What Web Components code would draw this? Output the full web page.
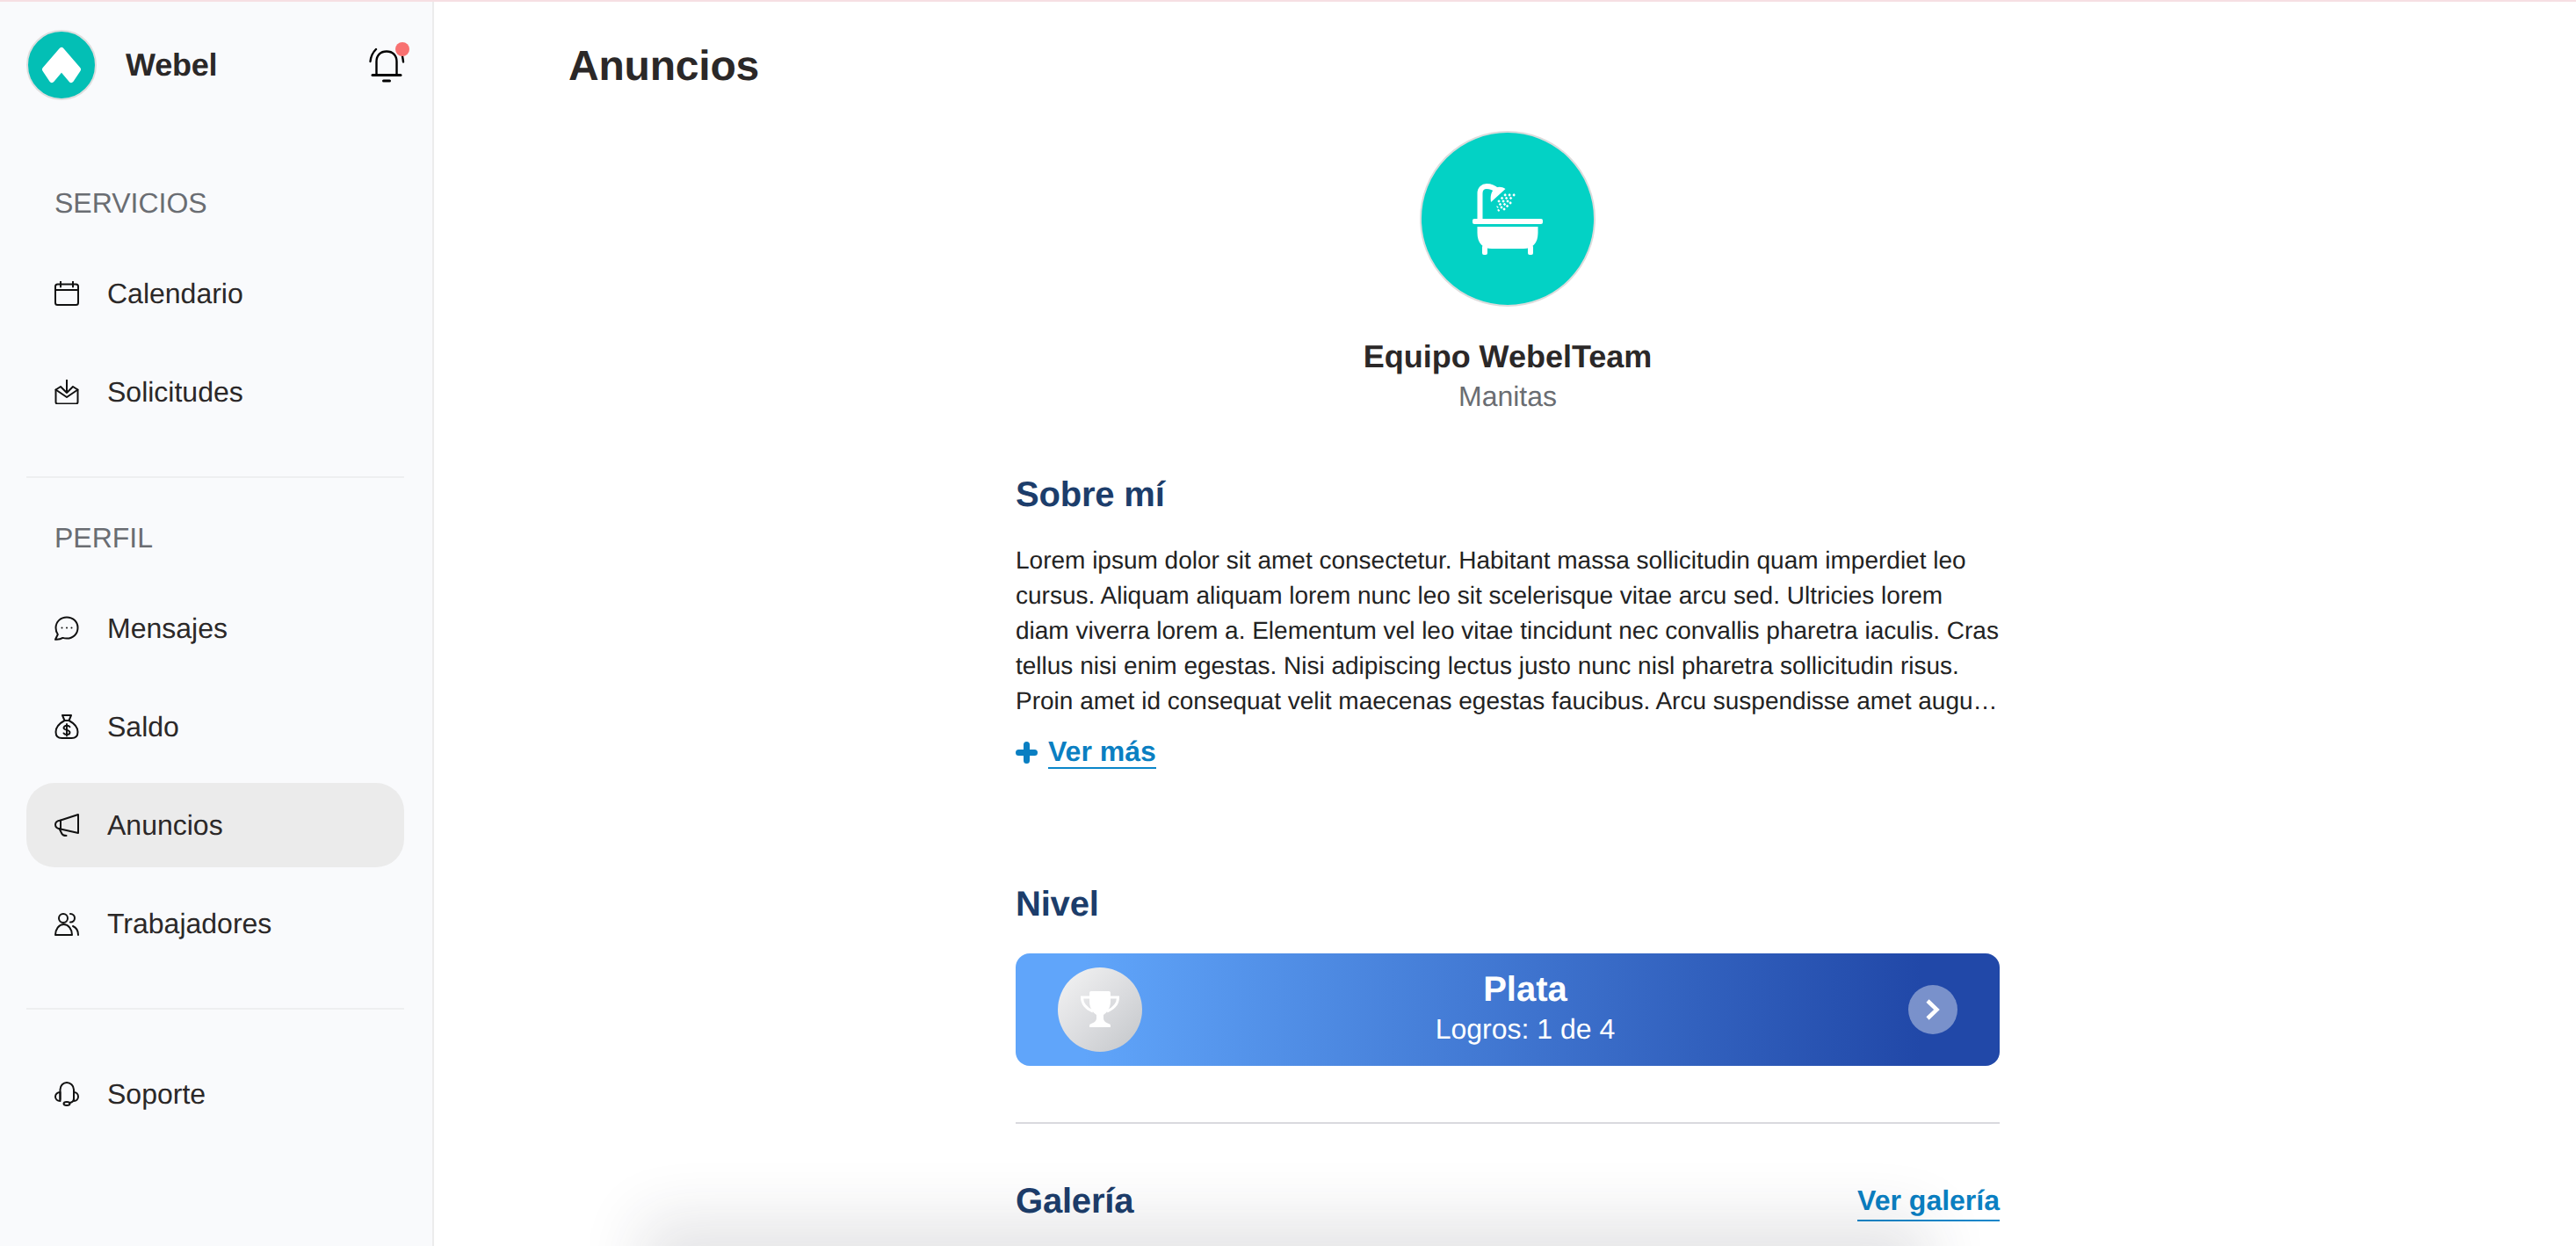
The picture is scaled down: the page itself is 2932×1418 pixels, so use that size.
<!DOCTYPE html>
<html lang="es">
<head>
<meta charset="utf-8">
<title>Anuncios</title>
<style>
  html, body { margin: 0; height: 100%; overflow: hidden; background: #fff; }
  body { font-family: "Liberation Sans", Arial, sans-serif; color: #2b2828; text-rendering: geometricPrecision; }
  app-shell { height: 1418px; }
</style>
</head>
<body>
<app-shell>
  <side-bar slot="side">
    <nav-label>SERVICIOS</nav-label>
    <nav-item icon="calendar">Calendario</nav-item>
    <nav-item icon="inbox">Solicitudes</nav-item>
    <nav-divider></nav-divider>
    <nav-label>PERFIL</nav-label>
    <nav-item icon="chat">Mensajes</nav-item>
    <nav-item icon="bag">Saldo</nav-item>
    <nav-item icon="megaphone" active>Anuncios</nav-item>
    <nav-item icon="users">Trabajadores</nav-item>
    <nav-divider></nav-divider>
    <nav-item icon="headset">Soporte</nav-item>
  </side-bar>
  <ad-page>
    <team-profile name="Equipo WebelTeam" role="Manitas"></team-profile>
    <about-block>Lorem ipsum dolor sit amet consectetur. Habitant massa sollicitudin quam imperdiet leo cursus. Aliquam aliquam lorem nunc leo sit scelerisque vitae arcu sed. Ultricies lorem diam viverra lorem a. Elementum vel leo vitae tincidunt nec convallis pharetra iaculis. Cras tellus nisi enim egestas. Nisi adipiscing lectus justo nunc nisl pharetra sollicitudin risus. Proin amet id consequat velit maecenas egestas faucibus. Arcu suspendisse amet augu…</about-block>
    <level-card level="Plata" progress="Logros: 1 de 4"></level-card>
    <gallery-head></gallery-head>
  </ad-page>
</app-shell>

<script>
const ICONS = {
  calendar: '<rect x="1" y="3.500" width="26" height="23.500" rx="2.500"/><path d="M1 10h26M7 .5v6M21 .5v6"/>',
  inbox: '<path d="M7 8L1.500 11.500V25.500a2 2 0 0 0 2 2h21a2 2 0 0 0 2-2V11.500L21 8"/><path d="M1.500 11.500L14 20L26.500 11.500"/><path d="M14 .5V15M7.500 8.500L14 15L20.500 8.500"/>',
  chat: '<path d="M14 1.500C7 1.500 1.500 6.500 1.500 13.500c0 3 .8 5.500 2.300 7.500L1 26.800c3.500.3 6.500-.6 8.500-1.900 1.400.5 2.900.7 4.500.7 7 0 12.500-5 12.500-12.100S21 1.500 14 1.500z"/><circle cx="8.500" cy="13.500" r="1" fill="currentColor" stroke="none"/><circle cx="14" cy="13.500" r="1" fill="currentColor" stroke="none"/><circle cx="19.500" cy="13.500" r="1" fill="currentColor" stroke="none"/>',
  bag: '<path d="M9 1h10l-2.500 6h-5z"/><path d="M11.500 7C6 10 1.500 14.500 1.500 20c0 5 3 7 7 7h11c4 0 7-2 7-7 0-5.500-4.500-10-10-13"/><path d="M17.500 14.300c-.6-1-1.900-1.600-3.500-1.600-2 0-3.500 1-3.500 2.600 0 3.400 7 1.700 7 5.100 0 1.600-1.500 2.600-3.500 2.600-1.600 0-2.900-.6-3.500-1.600M14 11v13.500" stroke-width="1.900"/>',
  megaphone: '<path d="M27 2v21L7 18.500C3.500 18 1 16 1 13.500S3.500 9 7 8.500z"/><path d="M7 8.500v10M5.500 18l3 6c.6 1.200 2.500 2 5 2"/>',
  users: '<circle cx="10" cy="8" r="5"/><path d="M1 27c0-6.500 4-12 9.500-12s9.500 5.500 9.500 12z"/><path d="M18 3c3 0 5 2 5 4.800s-2 4.800-5 4.800M21 17c3.500 1.500 6 5 6 10"/>',
  headset: '<path d="M6.500 20V9C6.500 4.500 10 1 14 1s8 3.500 8 8v10c0 2.500-2 4.500-4.500 5"/><path d="M6.500 12C3.200 12 1 14.200 1 17s2.200 5 5.500 5zM22 12c3 0 5 2.200 5 5s-2 5-5 5z"/><ellipse cx="14" cy="25" rx="3.500" ry="2"/>'
};

function svgIcon(name) {
  return `<svg viewBox="0 0 28 28" width="28" height="28" fill="none" stroke="currentColor" stroke-width="2" stroke-linecap="round" stroke-linejoin="round">${ICONS[name]}</svg>`;
}

class AppShell extends HTMLElement {
  constructor() {
    super();
    this.attachShadow({ mode: 'open' }).innerHTML = `
    <style>
      :host { display: flex; flex-direction: column; position: relative; overflow: hidden; }
      #strip { height: 2px; background: #f6dfe3; flex: none; }
      #body { display: flex; flex: 1; min-height: 0; }
      #sheet {
        position: absolute; left: 760px; width: 1405px; top: 1418px; height: 100px;
        box-shadow: 0 -2px 70px 30px rgba(40, 45, 55, .12);
      }
    </style>
    <div id="strip"></div>
    <div id="body"><slot name="side"></slot><slot></slot></div>
    <div id="sheet"></div>`;
  }
}

class SideBar extends HTMLElement {
  constructor() {
    super();
    this.attachShadow({ mode: 'open' }).innerHTML = `
    <style>
      :host {
        display: block; flex: none; box-sizing: border-box; width: 494px;
        background: #f9fafc; border-right: 2px solid #ececec; padding: 32px 32px 0 30px;
      }
      header { display: flex; align-items: center; height: 80px; margin-bottom: 97px; position: relative; }
      #logo {
        box-sizing: border-box; width: 80px; height: 80px; border-radius: 50%; background: #03bfb5;
        border: 2px solid #dedede; display: flex; align-items: center; justify-content: center; flex: none;
      }
      b { font-size: 36px; margin-left: 33px; color: #2b2828; letter-spacing: -.2px; }
      #bell { position: absolute; left: 390px; top: 21px; color: #000; }
      #dot { position: absolute; left: 420px; top: 14px; width: 16px; height: 16px; border-radius: 50%; background: #f87171; }
    </style>
    <header>
      <div id="logo">
        <svg width="46" height="42" viewBox="0 0 46 42"><path d="M23 4L4 26L12 38L23 25L34 38L42 26Z" fill="#fff" stroke="#fff" stroke-width="6" stroke-linejoin="round"/></svg>
      </div>
      <b>Webel</b>
      <svg id="bell" width="42" height="40" viewBox="0 0 42 40" fill="none" stroke="currentColor" stroke-width="2.400" stroke-linecap="round">
        <path d="M4 30.500H36" stroke-width="3"/>
        <path d="M8.500 30V15C8.500 8 13 3.500 20 3.500S31.500 8 31.500 15V30"/>
        <path d="M16.500 37h7" stroke-width="3"/>
        <path d="M1.500 15C2 9.500 4 5 8 1M39 15.500c-.2-2.500-.5-4-1-6.500"/>
      </svg>
      <div id="dot"></div>
    </header>
    <slot></slot>`;
  }
}

class NavLabel extends HTMLElement {
  constructor() {
    super();
    this.attachShadow({ mode: 'open' }).innerHTML = `
    <style>
      :host { display: block; font-size: 32px; line-height: 48px; padding-left: 32px; color: #6a6d72; margin: -4px 0 31px; }
    </style>
    <slot></slot>`;
  }
}

class NavDivider extends HTMLElement {
  constructor() {
    super();
    this.attachShadow({ mode: 'open' }).innerHTML = `
    <style>
      :host { display: block; height: 2px; background: #eeeff0; margin: 48px 0; }
    </style>`;
  }
}

class NavItem extends HTMLElement {
  constructor() {
    super();
    const icon = this.getAttribute('icon');
    this.attachShadow({ mode: 'open' }).innerHTML = `
    <style>
      :host {
        display: flex; align-items: center; gap: 32px; box-sizing: border-box; height: 96px;
        padding-left: 32px; margin-bottom: 16px; border-radius: 32px;
        font-size: 32px; color: #2b2828;
      }
      :host([active]) { background: #ebebeb; }
      svg { flex: none; color: #111; }
    </style>
    ${svgIcon(icon)}<span><slot></slot></span>`;
  }
}

class AdPage extends HTMLElement {
  constructor() {
    super();
    this.attachShadow({ mode: 'open' }).innerHTML = `
    <style>
      :host { display: block; flex: 1; min-width: 0; padding: 47px 0 0 153px; }
      h1 { margin: 0 0 46px; font-size: 48px; line-height: 54px; font-weight: 700; color: #2b2828; letter-spacing: -.2px; }
      #col { width: 1120px; margin-left: 509px; }
    </style>
    <h1>Anuncios</h1>
    <div id="col"><slot></slot></div>`;
  }
}

class TeamProfile extends HTMLElement {
  constructor() {
    super();
    this.attachShadow({ mode: 'open' }).innerHTML = `
    <style>
      :host { display: flex; flex-direction: column; align-items: center; }
      #avatar {
        box-sizing: border-box; width: 200px; height: 200px; border-radius: 50%; background: #03d2c5;
        border: 2px solid #dcdcdc; display: flex; align-items: center; justify-content: center;
      }
      #name { font-size: 36px; line-height: 44px; font-weight: 700; margin-top: 35px; color: #2b2828; }
      #role { font-size: 32px; line-height: 44px; margin-top: 1px; color: #6a6d72; }
    </style>
    <div id="avatar">
      <svg width="80" height="81" viewBox="0 0 80 81" fill="#fff">
        <rect x="0" y="40" width="80" height="6" rx="2"/>
        <path d="M5.500 49H74.500V56C74.500 68 68 74 58 74H22C12 74 5.500 68 5.500 56Z"/>
        <rect x="11" y="70" width="6" height="11" rx="2"/>
        <rect x="63" y="70" width="6" height="11" rx="2"/>
        <path d="M8.500 40V11C8.500 6 12 3 16 3C20 3 24 4 28 8" fill="none" stroke="#fff" stroke-width="6"/>
        <path d="M21 21L37.500 6C33 3 27 3 24 7C21 10 20 15 21 21Z"/>
        <g fill="none" stroke="#fff" stroke-width="2.500" stroke-dasharray="2.500 2.500">
          <path d="M38 12L28 22"/><path d="M43 12L28 27"/><path d="M48 12L29 31"/><path d="M44 21L35 30"/>
        </g>
      </svg>
    </div>
    <div id="name">${this.getAttribute('name')}</div>
    <div id="role">${this.getAttribute('role')}</div>`;
  }
}

class AboutBlock extends HTMLElement {
  constructor() {
    super();
    this.attachShadow({ mode: 'open' }).innerHTML = `
    <style>
      :host { display: block; margin-top: 66px; }
      h2 { margin: 0 0 31px; font-size: 40px; line-height: 48px; color: #1c3d6b; letter-spacing: -.2px; }
      p { margin: 0; font-size: 28px; line-height: 40px; color: #222; }
      #more { display: flex; align-items: center; gap: 12px; margin-top: 18px; height: 40px; }
      a { font-size: 32px; font-weight: 700; line-height: 36px; color: #0a7fc2; border-bottom: 2px solid #0a86c9; }
    </style>
    <h2>Sobre mí</h2>
    <p><slot></slot></p>
    <div id="more">
      <svg width="25" height="25" viewBox="0 0 25 25" stroke="#0a7fc2" stroke-width="7" stroke-linecap="round"><path d="M12.500 3.500v18M3.500 12.500h18"/></svg>
      <a>Ver más</a>
    </div>`;
  }
}

class LevelCard extends HTMLElement {
  constructor() {
    super();
    this.attachShadow({ mode: 'open' }).innerHTML = `
    <style>
      :host { display: block; margin-top: 129px; }
      h2 { margin: 0 0 32px; font-size: 40px; line-height: 48px; color: #1c3d6b; letter-spacing: -.2px; }
      #card {
        display: flex; align-items: center; height: 128px; border-radius: 16px; padding: 0 48px;
        background: linear-gradient(90deg, #60a5fa 7%, #2148a8 92%); color: #fff;
      }
      #medal {
        width: 96px; height: 96px; border-radius: 50%; flex: none;
        background: linear-gradient(135deg, #f4f4f4 0%, #dadbde 55%, #c3c6c9 100%);
        display: flex; align-items: center; justify-content: center;
      }
      #text { flex: 1; text-align: center; padding-bottom: 4px; }
      #level { font-size: 40px; line-height: 44px; font-weight: 700; }
      #progress { font-size: 32px; line-height: 38px; margin-top: 4px; }
      #go {
        width: 56px; height: 56px; border-radius: 50%; flex: none; background: rgba(255, 255, 255, .4);
        display: flex; align-items: center; justify-content: center;
      }
    </style>
    <h2>Nivel</h2>
    <div id="card">
      <div id="medal">
        <svg width="46" height="42" viewBox="0 0 46 42" fill="#fff">
          <path d="M13 0H33Q35 0 35 2V12C35 20 30 25 27 27V31C27 34 30 36 33 37Q35 37.500 35 39V41H11V39Q11 37.500 13 37C16 36 19 34 19 31V27C16 25 11 20 11 12V2Q11 0 13 0Z"/>
          <path d="M11 7H2.500C2.500 15 8 20 15 23M35 7H43.500C43.500 15 38 20 31 23" fill="none" stroke="#fff" stroke-width="3"/>
        </svg>
      </div>
      <div id="text">
        <div id="level">${this.getAttribute('level')}</div>
        <div id="progress">${this.getAttribute('progress')}</div>
      </div>
      <div id="go">
        <svg width="20" height="26" viewBox="0 0 20 26" fill="none" stroke="#fff" stroke-width="4.500"><path d="M4 3L14.500 13L4 23"/></svg>
      </div>
    </div>`;
  }
}

class GalleryHead extends HTMLElement {
  constructor() {
    super();
    this.attachShadow({ mode: 'open' }).innerHTML = `
    <style>
      :host { display: block; margin-top: 64px; border-top: 2px solid #d9d9de; padding-top: 64px; }
      #row { display: flex; justify-content: space-between; align-items: center; }
      h2 { margin: 0; font-size: 40px; line-height: 48px; color: #1c3d6b; letter-spacing: -.2px; }
      a { font-size: 32px; font-weight: 700; line-height: 36px; color: #0a7fc2; border-bottom: 2px solid #0a86c9; padding-bottom: 4px; margin-top: 4px; }
    </style>
    <div id="row"><h2>Galería</h2><a>Ver galería</a></div>`;
  }
}

customElements.define('app-shell', AppShell);
customElements.define('side-bar', SideBar);
customElements.define('nav-label', NavLabel);
customElements.define('nav-divider', NavDivider);
customElements.define('nav-item', NavItem);
customElements.define('ad-page', AdPage);
customElements.define('team-profile', TeamProfile);
customElements.define('about-block', AboutBlock);
customElements.define('level-card', LevelCard);
customElements.define('gallery-head', GalleryHead);
</script>
</body>
</html>
